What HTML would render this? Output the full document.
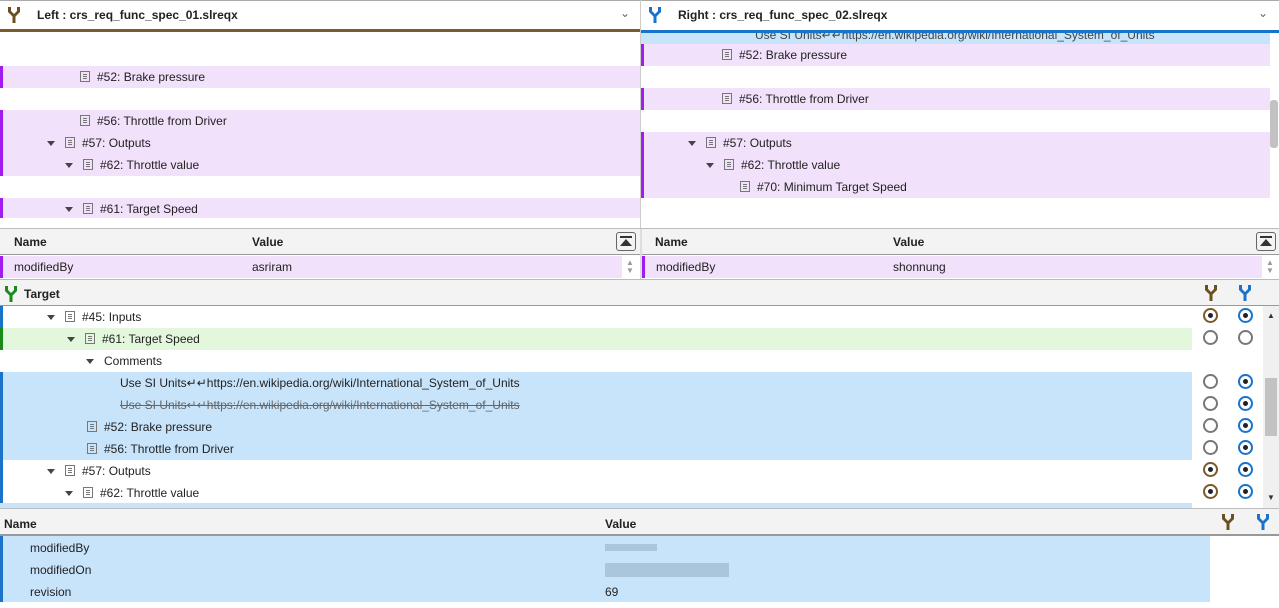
<!DOCTYPE html>
<html><head><style>
*{margin:0;padding:0;box-sizing:border-box}
body{width:1279px;height:608px;overflow:hidden;background:#fff;font-family:"Liberation Sans",sans-serif;font-size:12px;color:#222;position:relative}
.a{position:absolute}
.r{position:absolute;height:22px;line-height:23px;white-space:nowrap}
.p{background:#f1e1fb}
.b{background:#c8e4fb}
.g{background:#e2f7dc}
.bp{border-left:3px solid #a21bf0}
.bb{border-left:3px solid #1a73c8}
.bg{border-left:3px solid #1a8a1a}
.doc{display:inline-block;width:10px;height:11px;border:1px solid #777;vertical-align:-1px;margin-right:7px;background:linear-gradient(#777,#777) 2px 2px/4px 1px no-repeat,linear-gradient(#777,#777) 2px 4px/4px 1px no-repeat,linear-gradient(#777,#777) 2px 6px/4px 1px no-repeat}
.tri{display:inline-block;width:0;height:0;border-left:4px solid transparent;border-right:4px solid transparent;border-top:5px solid #444;margin-right:10px;vertical-align:1px}
.hd{font-weight:bold;font-size:12px}
.rad{position:absolute;width:15px;height:15px;border-radius:50%;border:2px solid #777;background:#fff}
.rb{border-color:#1a73c8}.rn{border-color:#7a5a2a}
.rb::after,.rn::after{content:"";position:absolute;left:50%;top:50%;margin:-2.5px 0 0 -2.5px;width:5px;height:5px;border-radius:50%;background:#222}
</style></head><body>
<svg width="0" height="0" style="position:absolute"><defs><path id="y" d="M1 1v5l4.5 4.5V17h3v-6.5L13 6V1h-3v4l-3 3-3-3V1z"/></defs></svg>
<div class="a" style="left:0;top:0;width:1279px;height:1px;background:#aaa"></div>
<div class="a" style="left:0;top:29px;width:640px;height:3px;background:#7a5c2e"></div>
<div class="a" style="left:641px;top:30px;width:638px;height:3px;background:#1a73c8"></div>
<div class="a" style="left:640px;top:0;width:1px;height:228px;background:#ccc"></div>
<svg class="a" style="left:7px;top:6px" width="14" height="18"><use href="#y" fill="#6b4f20"/></svg>
<div class="a hd" style="left:37px;top:8px">Left : crs_req_func_spec_01.slreqx</div>
<div class="a" style="left:620px;top:6px;color:#666">&#8964;</div>
<svg class="a" style="left:648px;top:6px" width="14" height="18"><use href="#y" fill="#1a73c8"/></svg>
<div class="a hd" style="left:678px;top:8px">Right : crs_req_func_spec_02.slreqx</div>
<div class="a" style="left:1258px;top:6px;color:#666">&#8964;</div>
<div class="r p bp" style="left:0;top:66px;width:640px;padding-left:77px"><span class="doc"></span>#52: Brake pressure</div>
<div class="r p bp" style="left:0;top:110px;width:640px;padding-left:77px;height:66px"><span class="doc"></span>#56: Throttle from Driver</div>
<div class="r" style="left:47px;top:132px"><span class="tri"></span><span class="doc"></span>#57: Outputs</div>
<div class="r" style="left:65px;top:154px"><span class="tri"></span><span class="doc"></span>#62: Throttle value</div>
<div class="r p bp" style="left:0;top:198px;width:640px;height:20px;padding-left:62px"><span class="tri"></span><span class="doc"></span>#61: Target Speed</div>
<div class="r b" style="left:641px;top:33px;width:629px;height:11px;line-height:4px;padding-left:114px;overflow:hidden;color:#444">Use SI Units↵↵https://en.wikipedia.org/wiki/International_System_of_Units</div>
<div class="r p bp" style="left:641px;top:44px;width:629px;padding-left:78px"><span class="doc"></span>#52: Brake pressure</div>
<div class="r p bp" style="left:641px;top:88px;width:629px;padding-left:78px"><span class="doc"></span>#56: Throttle from Driver</div>
<div class="a p bp" style="left:641px;top:132px;width:629px;height:66px"></div>
<div class="r" style="left:688px;top:132px"><span class="tri"></span><span class="doc"></span>#57: Outputs</div>
<div class="r" style="left:706px;top:154px"><span class="tri"></span><span class="doc"></span>#62: Throttle value</div>
<div class="r" style="left:740px;top:176px"><span class="doc"></span>#70: Minimum Target Speed</div>
<div class="a" style="left:1270px;top:100px;width:8px;height:48px;background:#c2c2c2;border-radius:3px"></div>
<div class="a" style="left:0;top:228px;width:1279px;height:1px;background:#bbb"></div>
<div class="a" style="left:0;top:229px;width:1279px;height:26px;background:#f3f3f3;border-bottom:1px solid #999"></div>
<div class="a" style="left:640px;top:229px;width:2px;height:50px;background:#ddd"></div>
<div class="a hd" style="left:14px;top:235px">Name</div><div class="a hd" style="left:252px;top:235px">Value</div>
<div class="a hd" style="left:655px;top:235px">Name</div><div class="a hd" style="left:893px;top:235px">Value</div>
<div class="a" style="left:616px;top:232px;width:20px;height:19px;border:1px solid #666;border-radius:3px"><div class="a" style="left:3px;top:3px;width:12px;height:2px;background:#333"></div><div class="a" style="left:3px;top:6px;border-left:6px solid transparent;border-right:6px solid transparent;border-bottom:7px solid #333"></div></div>
<div class="a" style="left:1256px;top:232px;width:20px;height:19px;border:1px solid #666;border-radius:3px"><div class="a" style="left:3px;top:3px;width:12px;height:2px;background:#333"></div><div class="a" style="left:3px;top:6px;border-left:6px solid transparent;border-right:6px solid transparent;border-bottom:7px solid #333"></div></div>
<div class="r p bp" style="left:0;top:256px;width:622px;padding-left:11px">modifiedBy</div><div class="a" style="left:252px;top:256px;line-height:23px">asriram</div>
<div class="r p bp" style="left:642px;top:256px;width:620px;padding-left:11px">modifiedBy</div><div class="a" style="left:893px;top:256px;line-height:23px">shonnung</div>
<div class="a" style="left:626px;top:259px;color:#999;font-size:8px;line-height:8px">▲<br>▼</div>
<div class="a" style="left:1266px;top:259px;color:#999;font-size:8px;line-height:8px">▲<br>▼</div>
<div class="a" style="left:0;top:279px;width:1279px;height:27px;background:#f3f3f3;border-top:1px solid #bbb;border-bottom:1px solid #999"></div>
<svg class="a" style="left:4px;top:285px" width="14" height="18"><use href="#y" fill="#1a8a1a"/></svg>
<div class="a hd" style="left:24px;top:287px">Target</div>
<svg class="a" style="left:1204px;top:284px" width="14" height="18"><use href="#y" fill="#6b4f20"/></svg>
<svg class="a" style="left:1238px;top:284px" width="14" height="18"><use href="#y" fill="#1a73c8"/></svg>
<div class="a bb" style="left:0;top:306px;width:0;height:22px"></div>
<div class="r" style="left:47px;top:306px"><span class="tri"></span><span class="doc"></span>#45: Inputs</div>
<div class="r g bg" style="left:0;top:328px;width:1192px;padding-left:64px"><span class="tri"></span><span class="doc"></span>#61: Target Speed</div>
<div class="r" style="left:86px;top:350px"><span class="tri"></span>Comments</div>
<div class="a b bb" style="left:0;top:372px;width:1192px;height:88px"></div>
<div class="r" style="left:120px;top:372px">Use SI Units↵↵https://en.wikipedia.org/wiki/International_System_of_Units</div>
<div class="r" style="left:120px;top:394px;text-decoration:line-through;color:#666">Use SI Units↵↵https://en.wikipedia.org/wiki/International_System_of_Units</div>
<div class="r" style="left:87px;top:416px"><span class="doc"></span>#52: Brake pressure</div>
<div class="r" style="left:87px;top:438px"><span class="doc"></span>#56: Throttle from Driver</div>
<div class="a bb" style="left:0;top:460px;width:0;height:48px"></div>
<div class="r" style="left:47px;top:460px"><span class="tri"></span><span class="doc"></span>#57: Outputs</div>
<div class="r" style="left:65px;top:482px"><span class="tri"></span><span class="doc"></span>#62: Throttle value</div>
<div class="a b" style="left:0;top:503px;width:1192px;height:5px"></div>
<div class="rad rn" style="left:1203px;top:308px"></div><div class="rad rb" style="left:1238px;top:308px"></div>
<div class="rad" style="left:1203px;top:330px"></div><div class="rad" style="left:1238px;top:330px"></div>
<div class="rad" style="left:1203px;top:374px"></div><div class="rad rb" style="left:1238px;top:374px"></div>
<div class="rad" style="left:1203px;top:396px"></div><div class="rad rb" style="left:1238px;top:396px"></div>
<div class="rad" style="left:1203px;top:418px"></div><div class="rad rb" style="left:1238px;top:418px"></div>
<div class="rad" style="left:1203px;top:440px"></div><div class="rad rb" style="left:1238px;top:440px"></div>
<div class="rad rn" style="left:1203px;top:462px"></div><div class="rad rb" style="left:1238px;top:462px"></div>
<div class="rad rn" style="left:1203px;top:484px"></div><div class="rad rb" style="left:1238px;top:484px"></div>
<div class="a" style="left:1263px;top:306px;width:16px;height:202px;background:#f0f0f0"></div>
<div class="a" style="left:1265px;top:378px;width:12px;height:58px;background:#c2c2c2"></div>
<div class="a" style="left:1267px;top:311px;font-size:8px;color:#333">▲</div>
<div class="a" style="left:1267px;top:493px;font-size:8px;color:#333">▼</div>
<div class="a" style="left:0;top:508px;width:1279px;height:28px;background:#f3f3f3;border-top:1px solid #bbb;border-bottom:2px solid #999"></div>
<div class="a hd" style="left:4px;top:517px">Name</div><div class="a hd" style="left:605px;top:517px">Value</div>
<svg class="a" style="left:1221px;top:513px" width="14" height="18"><use href="#y" fill="#6b4f20"/></svg>
<svg class="a" style="left:1256px;top:513px" width="14" height="18"><use href="#y" fill="#1a73c8"/></svg>
<div class="a b bb" style="left:0;top:536px;width:1210px;height:66px"></div>
<div class="r" style="left:30px;top:537px">modifiedBy</div>
<div class="r" style="left:30px;top:559px">modifiedOn</div>
<div class="r" style="left:30px;top:581px">revision</div>
<div class="a" style="left:605px;top:544px;width:52px;height:7px;background:#a9c6dc"></div>
<div class="a" style="left:605px;top:563px;width:124px;height:14px;background:#a9c6dc"></div>
<div class="r" style="left:605px;top:581px">69</div>
</body></html>
